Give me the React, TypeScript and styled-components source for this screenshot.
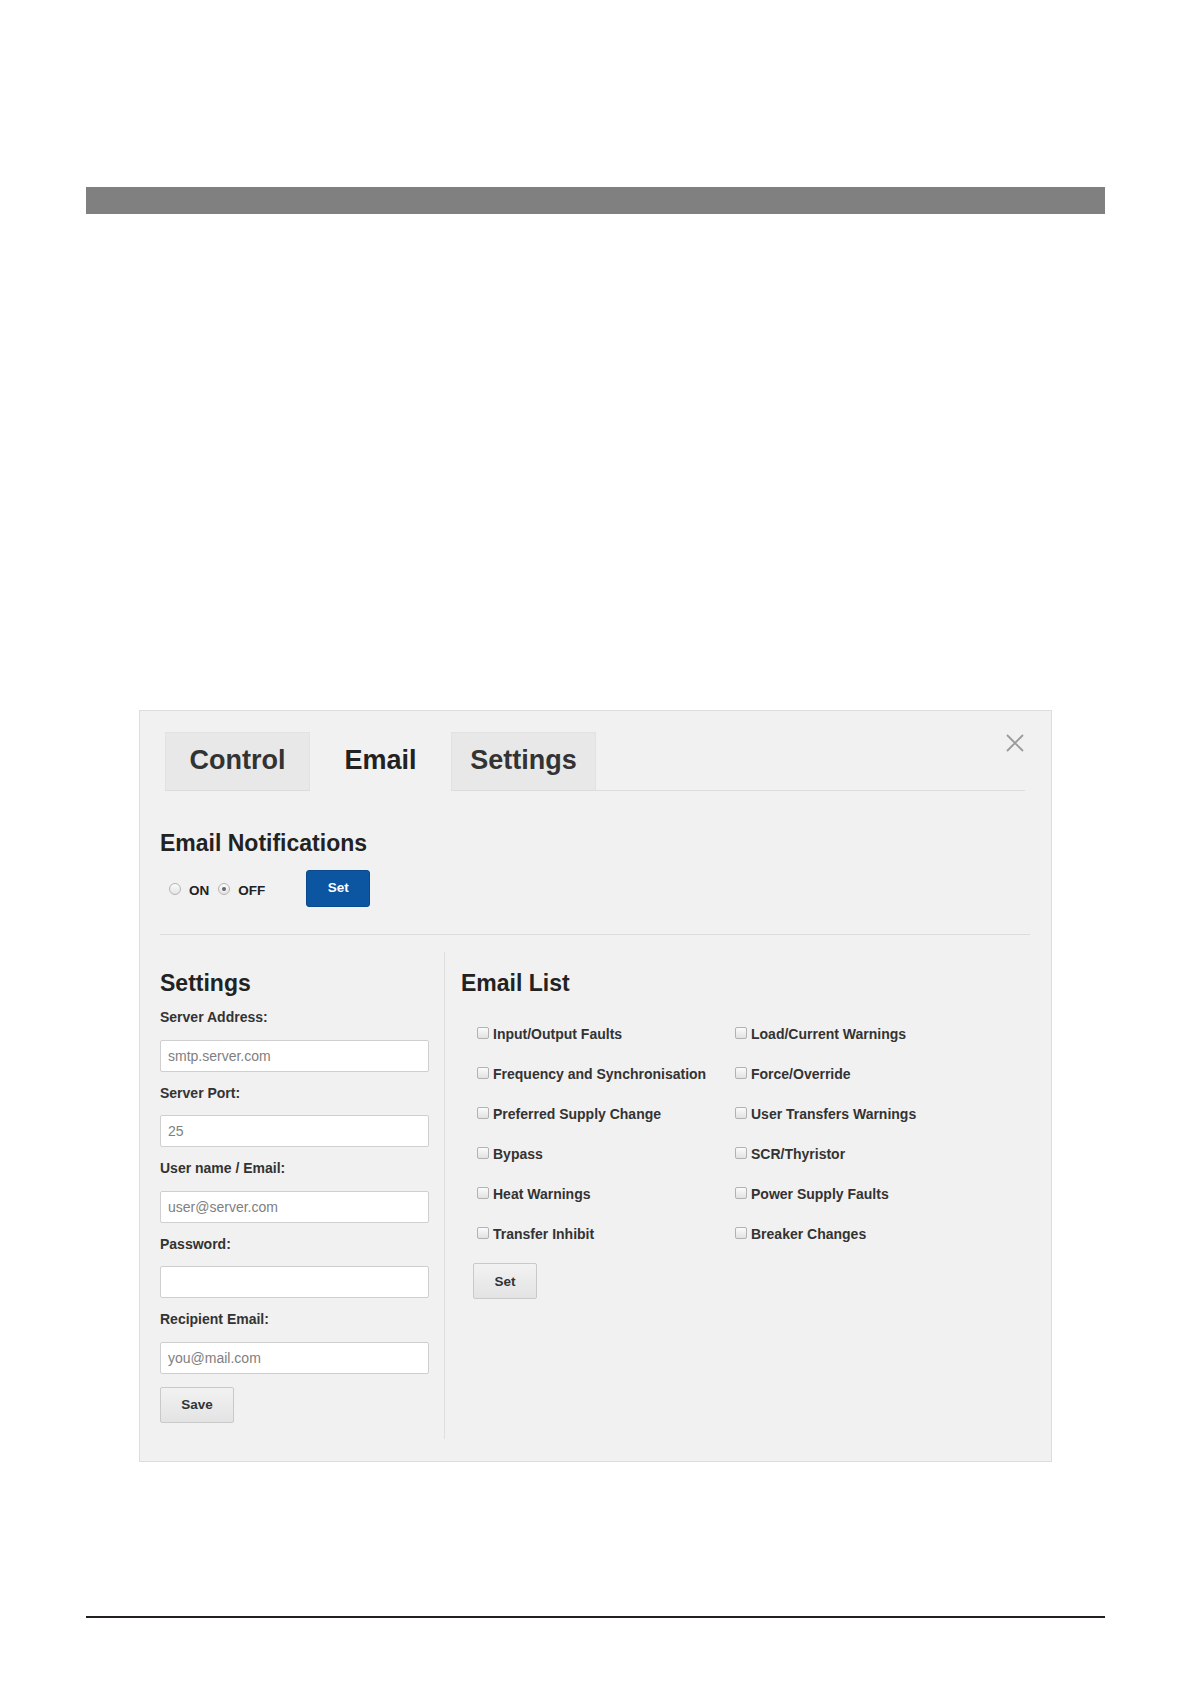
import styled, { createGlobalStyle } from "styled-components";

const GlobalStyle = createGlobalStyle`
  html, body {
    margin: 0;
    padding: 0;
    background: #ffffff;
  }
  body {
    font-family: "Liberation Sans", Arial, sans-serif;
    color: #333;
  }
  * {
    box-sizing: border-box;
  }
`;

const Page = styled.div`
  width: 1190px;
  min-height: 1684px;
  padding-top: 187px;
`;

const HeaderBar = styled.div`
  margin-left: 86px;
  width: 1019px;
  height: 27px;
  background-color: #808080;
`;

const Panel = styled.div`
  margin: 496px 0 0 139px;
  width: 913px;
  height: 752px;
  background-color: #f1f1f1;
  border: 1px solid #dddddd;
  padding: 21px 21px 0 20px;
`;

const TabBar = styled.div`
  display: flex;
  margin: 0 5px;
  height: 59px;
  border-bottom: 1px solid #dcdcdc;
`;

const Tab = styled.div<{ $active?: boolean; $width: number }>`
  width: ${(p) => p.$width}px;
  height: ${(p) => (p.$active ? "59px" : "58px")};
  display: flex;
  align-items: center;
  justify-content: center;
  font-size: 27px;
  font-weight: 700;
  color: ${(p) => (p.$active ? "#222" : "#333")};
  background-color: ${(p) => (p.$active ? "#f1f1f1" : "#e8e8e8")};
  border: ${(p) => (p.$active ? "none" : "1px solid #e2e2e2")};
  border-bottom: none;
  padding-bottom: 2px;
  cursor: pointer;
`;

const CloseButton = styled.button`
  margin-left: auto;
  align-self: flex-start;
  margin-top: 1px;
  width: 20px;
  height: 20px;
  padding: 0;
  border: none;
  background: transparent;
  cursor: pointer;
  display: flex;
`;

const SectionTitle = styled.h2<{ $top?: number }>`
  margin: ${(p) => p.$top ?? 0}px 0 0;
  font-size: 23px;
  line-height: 26px;
  font-weight: 700;
  color: #222;
`;

const ToggleRow = styled.div`
  display: flex;
  align-items: center;
  margin-top: 14px;
  padding-left: 9px;
  height: 37px;
`;

const RadioLabel = styled.label`
  display: flex;
  align-items: center;
  gap: 8px;
  padding-top: 4px;
  font-size: 13.5px;
  font-weight: 700;
  color: #222;
  margin-right: 9px;
`;

const Radio = styled.input`
  appearance: none;
  margin: 0;
  width: 12px;
  height: 12px;
  border-radius: 50%;
  border: 1px solid #b4b4b4;
  background: linear-gradient(#fbfbfb, #e4e4e4);
  display: grid;
  place-items: center;
  transform: translateY(-2px);

  &:checked::after {
    content: "";
    width: 4px;
    height: 4px;
    border-radius: 50%;
    background: #666;
  }
`;

const PrimaryButton = styled.button`
  margin-left: 32px;
  width: 64px;
  height: 37px;
  border-radius: 3px;
  border: 1px solid #0a4a8c;
  background-color: #0b55a1;
  color: #fff;
  font-family: "Liberation Sans", Arial, sans-serif;
  font-size: 13.5px;
  font-weight: 700;
  padding-bottom: 3px;
  cursor: pointer;
`;

const Divider = styled.hr`
  margin: 27px 0 0;
  border: none;
  border-top: 1px solid #dcdcdc;
`;

const Columns = styled.div`
  display: flex;
  margin-top: 17px;
  height: 487px;
`;

const SettingsColumn = styled.div`
  width: 285px;
  padding: 18px 15px 0 0;
  border-right: 1px solid #dedede;
`;

const ListColumn = styled.div`
  flex: 1;
  padding: 18px 0 0 16px;
`;

const FieldLabel = styled.label`
  display: block;
  margin: 13px 0 13.5px;
  font-size: 14px;
  line-height: 17px;
  font-weight: 700;
  color: #333;
`;

const TextInput = styled.input`
  display: block;
  width: 269px;
  height: 32px;
  border: 1px solid #cfcfcf;
  border-radius: 2px;
  background: #fff;
  padding: 0 7px;
  font-family: "Liberation Sans", Arial, sans-serif;
  font-size: 14px;
  color: #333;

  &::placeholder {
    color: #808080;
  }
`;

const GrayButton = styled.button<{ $width: number; $top: number; $left?: number }>`
  display: block;
  margin: ${(p) => p.$top}px 0 0 ${(p) => p.$left ?? 0}px;
  width: ${(p) => p.$width}px;
  height: 36px;
  border: 1px solid #c9c9c9;
  border-radius: 2px;
  background: linear-gradient(#f2f2f2, #e3e3e3);
  color: #333;
  font-family: "Liberation Sans", Arial, sans-serif;
  font-size: 13.5px;
  font-weight: 700;
  cursor: pointer;
`;

const CheckGrid = styled.div`
  display: grid;
  grid-template-columns: 258px 258px;
  grid-auto-rows: 40px;
  margin-top: 18px;
  padding-left: 16px;
`;

const CheckItem = styled.label`
  display: flex;
  align-items: center;
  gap: 4px;
  padding-top: 1px;
  font-size: 14px;
  line-height: 17px;
  font-weight: 700;
  color: #333;
`;

const CheckBox = styled.input`
  appearance: none;
  margin: 0;
  width: 12px;
  height: 12px;
  border: 1px solid #b2b2b2;
  border-radius: 2px;
  background: linear-gradient(#fbfbfb, #e2e2e2);
  transform: translateY(-2px);
`;

const FooterRule = styled.div`
  margin: 154px 0 0 86px;
  width: 1019px;
  height: 2px;
  background-color: #231f20;
`;

const fields = [
  { label: "Server Address:", placeholder: "smtp.server.com" },
  { label: "Server Port:", placeholder: "25" },
  { label: "User name / Email:", placeholder: "user@server.com" },
  { label: "Password:", placeholder: "", type: "password" },
  { label: "Recipient Email:", placeholder: "you@mail.com" },
];

const notices = [
  "Input/Output Faults",
  "Load/Current Warnings",
  "Frequency and Synchronisation",
  "Force/Override",
  "Preferred Supply Change",
  "User Transfers Warnings",
  "Bypass",
  "SCR/Thyristor",
  "Heat Warnings",
  "Power Supply Faults",
  "Transfer Inhibit",
  "Breaker Changes",
];

const App = () => {
  return (
    <Page>
      <GlobalStyle />
      <HeaderBar />
      <Panel>
        <TabBar>
          <Tab $width={145}>Control</Tab>
          <Tab $width={141} $active>
            Email
          </Tab>
          <Tab $width={145}>Settings</Tab>
          <CloseButton aria-label="Close">
            <svg width="20" height="20" viewBox="0 0 20 20">
              <path
                d="M2 2 L18 18 M18 2 L2 18"
                stroke="#9a9a9a"
                strokeWidth="1.8"
                fill="none"
              />
            </svg>
          </CloseButton>
        </TabBar>

        <SectionTitle $top={39}>Email Notifications</SectionTitle>
        <ToggleRow>
          <RadioLabel>
            <Radio type="radio" name="notify" />
            ON
          </RadioLabel>
          <RadioLabel>
            <Radio type="radio" name="notify" defaultChecked />
            OFF
          </RadioLabel>
          <PrimaryButton>Set</PrimaryButton>
        </ToggleRow>
        <Divider />

        <Columns>
          <SettingsColumn>
            <SectionTitle>Settings</SectionTitle>
            {fields.map((f) => (
              <div key={f.label}>
                <FieldLabel>{f.label}</FieldLabel>
                <TextInput type={f.type ?? "text"} placeholder={f.placeholder} />
              </div>
            ))}
            <GrayButton $width={74} $top={13}>
              Save
            </GrayButton>
          </SettingsColumn>

          <ListColumn>
            <SectionTitle>Email List</SectionTitle>
            <CheckGrid>
              {notices.map((n) => (
                <CheckItem key={n}>
                  <CheckBox type="checkbox" />
                  {n}
                </CheckItem>
              ))}
            </CheckGrid>
            <GrayButton $width={64} $top={9} $left={12}>
              Set
            </GrayButton>
          </ListColumn>
        </Columns>
      </Panel>
      <FooterRule />
    </Page>
  );
};

export default App;
